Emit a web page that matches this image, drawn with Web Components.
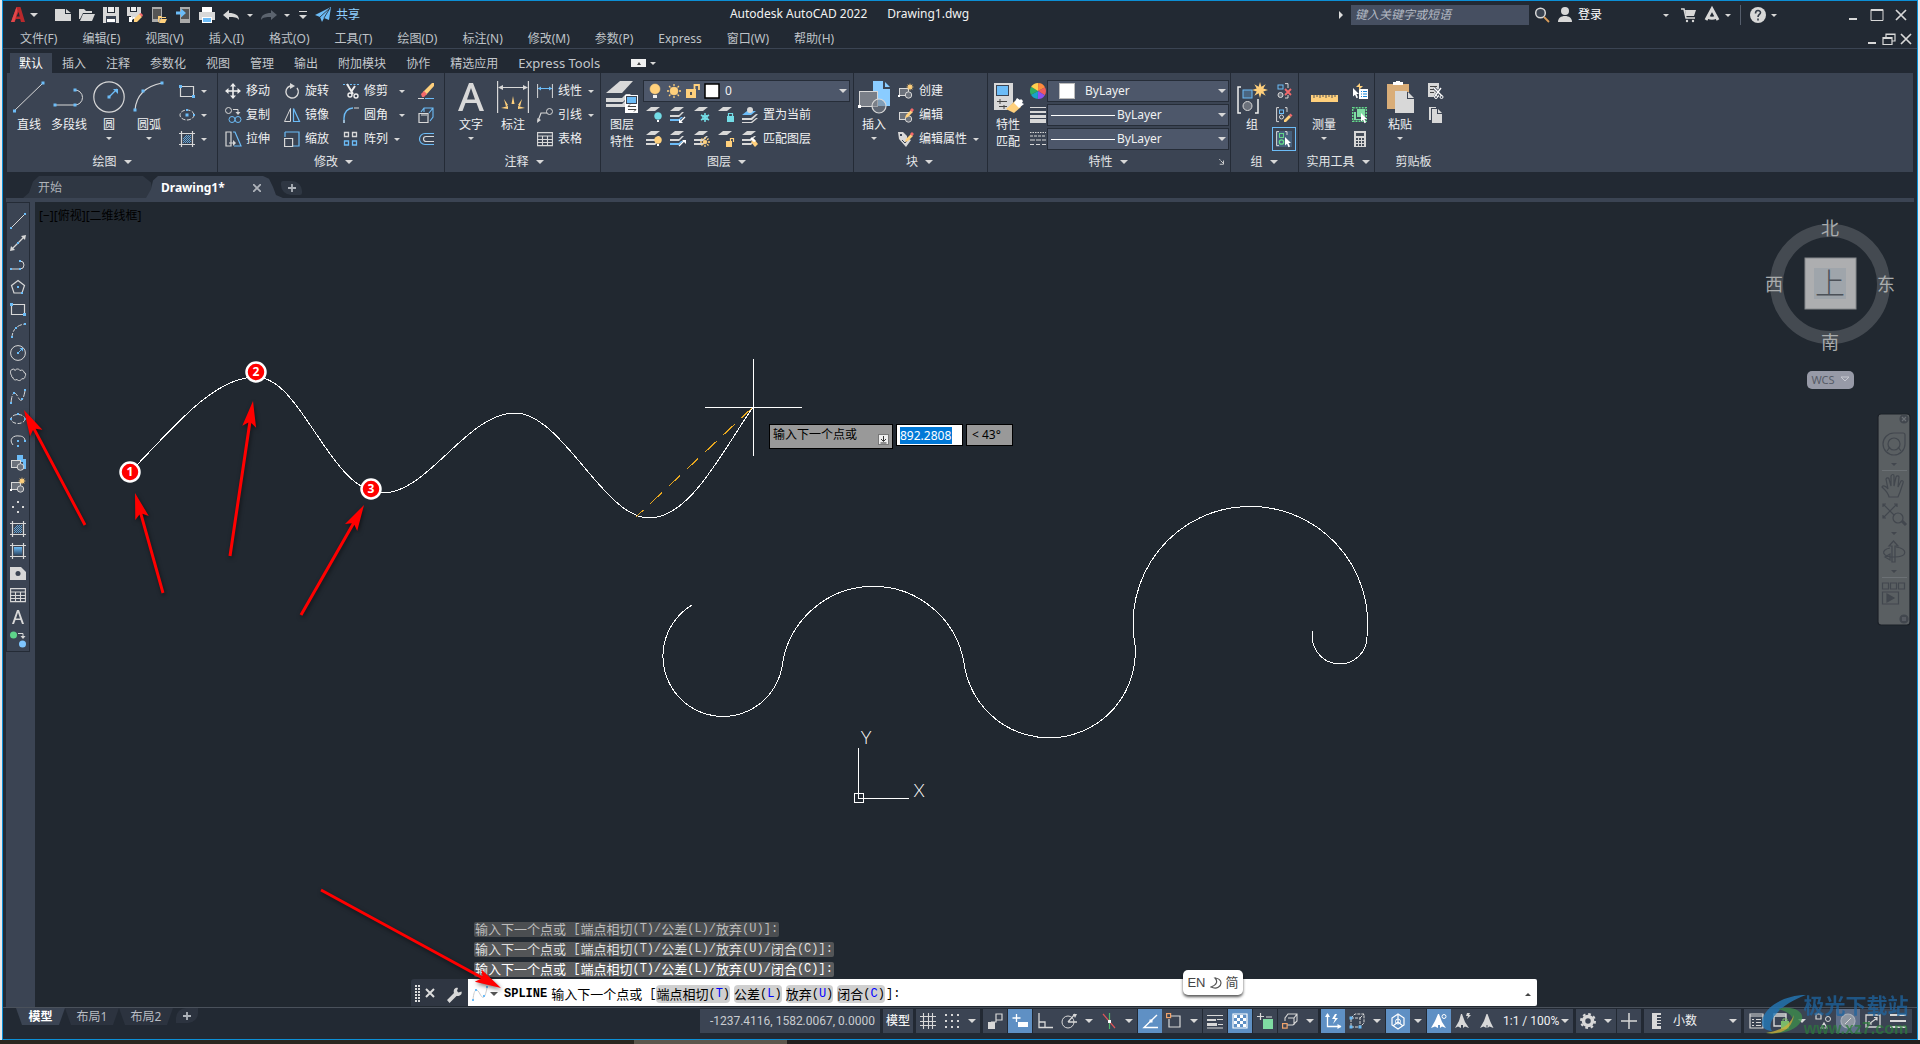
<!DOCTYPE html>
<html lang="zh-CN">
<head>
<meta charset="utf-8">
<title>Autodesk AutoCAD 2022</title>
<style>
html,body{height:100%;margin:0}
body{font:12px/16px "Noto Sans","Noto Sans CJK SC",sans-serif;color:#e4e6e8;background:#e9eaec;overflow:hidden}
</style>
</head>
<body>
<cad-window></cad-window>
<script>
const G = '#d8d8d8', B = '#6cbcf7', Y = '#ffd07c', D = '#3b4453';
const BASE = `
*{box-sizing:border-box}
button,input,select{font:inherit;color:inherit;background:none;border:0;margin:0;padding:0;outline:0;border-radius:0}
select{appearance:none}
a{color:inherit;text-decoration:none}
.tri{flex:none;width:0;height:0;border:3px solid transparent;border-top:3px solid #d8d8d8;border-bottom:0}
.tri.big{border-width:4px 4px 0 4px}
`;
const define = (name, markup, css, after) => customElements.define(name, class extends HTMLElement {
  constructor() { super(); this.attachShadow({ mode: 'open' }); }
  connectedCallback() {
    const m = typeof markup === 'function' ? markup(this) : markup;
    this.shadowRoot.innerHTML = `<style>${BASE}${css}</style>${m}`;
    if (after) after(this.shadowRoot, this);
  }
});

/* ---------- icons ---------- */
const sq = (x, y, c = B, s = 3) => `<rect x="${x - s / 2}" y="${y - s / 2}" width="${s}" height="${s}" fill="${c}"/>`;
const ln = (d, c = G, w = 1) => `<path d="${d}" fill="none" stroke="${c}" stroke-width="${w}"/>`;
const fl = (d, c = G) => `<path d="${d}" fill="${c}"/>`;
const ci = (x, y, r, c = G, f = 'none', w = 1) => `<circle cx="${x}" cy="${y}" r="${r}" fill="${f}" stroke="${c}" stroke-width="${w}"/>`;
const pencil = fl('M8 8L13 3l2 2-5 5-3 1z', Y) + fl('M12 3l2-2 2 2-2 2z', '#f4696b');
const star = (x, y, r) => { let p = ''; for (let i = 0; i < 16; i++) { const a = i * Math.PI / 8, q = i % 2 ? r * .45 : r; p += (i ? 'L' : 'M') + (x + q * Math.sin(a)).toFixed(1) + ' ' + (y - q * Math.cos(a)).toFixed(1); } return fl(p + 'z', Y); };
const layer = (y, c = G) => fl(`M0 ${y + 4}L5 ${y}H14L9 ${y + 4}z`, c);
const stack = c => layer(0, G) + fl('M0 8h9l3-3h2l-5 5H0z', G) + fl('M0 12h9l2-2h2l-4 4H0z', c || G);
const bulb = (x, y, c) => ci(x, y, 3.5, c, c, .5) + `<rect x="${x - 1}" y="${y + 4}" width="2" height="2" fill="#fff"/>`;
const sun = (x, y, r) => { let p = ''; for (let i = 0; i < 8; i++) { const a = i * Math.PI / 4; p += `M${x + Math.cos(a) * (r + 1)} ${y + Math.sin(a) * (r + 1)}L${x + Math.cos(a) * (r + 3)} ${y + Math.sin(a) * (r + 3)}`; } return ci(x, y, r, Y, Y, .5) + ln(p, Y, 1.3); };
const person = ci(8, 4, 4, G, G, 0) + fl('M1 15c0-4 3-6 7-6s7 2 7 6z');
const cursor = (x, y) => `<path transform="translate(${x} ${y})" d="M0 0l6 6H3.500l1.500 3.500-1.500.7L2 6.700 0 8.500z" fill="#fff"/>`;
const I = {
  logo: [16, `<path d="M6.500 0h4L15 15h-4l-.8-3H6l-1.500 3H1z" fill="#b9292c"/><path d="M8.600 5L6.500 9.500h3.300z" fill="#222933"/><path d="M1 15l5.500-15L7.500 4 4.500 15z" fill="#e2484b"/>`],
  new: [16, fl('M0 2h10v5h6v7H0z') + fl('M11 2l5 4h-5z')],
  open: [16, fl('M0 2h5l2 2h6v2H4L1 12l-1 0z') + fl('M4 7h12l-3 7H1z')],
  save: [16, fl('M0 0h4v6h8V0h4v16H0z') + fl('M5 0h6v5H5z', '#eee') + fl('M3 9h10v7H3z', D) + fl('M4 12h8v3H4z', '#fff')],
  saveas: [16, fl('M0 0h3v5h7V0h4v9l-3 3H4V9H0z') + fl('M4 0h5v4H4z', '#eee') + fl('M2 10h3v5H2z', '#fff') + ln('M4 14l3-4 1 4', '#fff', 1) + fl('M7 12l5-5 3 3-5 5-3 0z', Y) + fl('M12 7l2-1 2 2-1 2z', '#f4696b')],
  openweb: [16, fl('M1 0h10v15H1z', '#aaa') + fl('M2 2h8v10H2z', '#555') + fl('M7 9h3l1 1h4v1H9l-2 5z', Y) + fl('M10 12h6l-2 4H8z', Y)],
  saveweb: [16, fl('M5 0h10v16H5z', '#aaa') + fl('M6 2h8v10H6z', '#555') + fl('M1 4.500h5V1.500L11 6 6 10.500v-3H1z', B)],
  print: [16, fl('M3 0h10v5H3z', '#fff') + fl('M0 5h16v8h-3v-3H3v3H0z') + fl('M3 10h10v6H3z', '#fff') + fl('M4 11h8v4H4z', B)],
  undo: [16, fl('M0 8l6-5v3c6 0 10 2 10 7-2-3-5-3-10-3v3z')],
  redo: [16, fl('M16 8l-6-5v3C4 6 0 8 0 13c2-3 5-3 10-3v3z', '#5b636e')],
  share: [16, fl('M0 8L16 0 14 13 9 11 7 15 5 10z', B) + ln('M5 10L15 1M9 11l6-10', '#2c3440', .9)],
  search: [16, ci(6.500, 6, 4.800, G, '#3a4350', 1.500) + ln('M10 10l5 5', '#d99d5b', 1.800)],
  person: [16, person],
  cart: [16, ln('M0 2h3l2 9h9', G, 1.500) + fl('M4 3h11l-2 6H5z') + ci(6, 14, 1.200, G, G, 0) + ci(12, 14, 1.200, G, G, 0)],
  alogo: [16, ln('M2 13L8 2l6 11M4 10c3 2 5 2 8 0', G, 3)],
  help: [16, ci(8, 8, 8, G, G, 0) + ln('M5.500 6.500c0-4 5-3.500 5-1 0 2-2.500 2-2.500 4.500M8 11.500v2', '#333b47', 1.600)],
  min: [16, fl('M4 11h8v2H4z')], max: [16, ln('M2 2.500h12v11H2zM2 3.500h12', G, 1)], restore: [16, ln('M5 6V3h9v7h-3M2 6.500h9v7H2zM2 7.500h9M5 3.500h9', G, 1.200)], close: [16, ln('M3 3l10 10M13 3L3 13', G, 1.700)],
  line: [32, ln('M1 30L30 2') + sq(1.500, 30) + sq(30, 2)],
  pline: [32, ln('M2 24h20M22 24a7 7 0 0 0 0-15') + sq(2, 24) + sq(22, 24) + sq(22, 9)],
  circle: [32, ci(16, 16, 15.200, G, 'none', 1.200) + ln('M16 16l8-8', B, 1.200) + fl('M20 8h5v5z', B) + sq(16, 16)],
  arc: [32, ln('M2 29C3 18 8 6 29 2', G, 1.200) + sq(2, 29) + sq(10, 10) + sq(29, 2)],
  rect: [16, ln('M1.500 3.500h13v10h-13z', G, 1.200) + sq(1.500, 3.500) + sq(14.500, 13.500)],
  ellipse: [16, `<ellipse cx="8" cy="8" rx="7" ry="5" fill="none" stroke="${G}" stroke-dasharray="4 1.500"/>` + sq(8, 8) + sq(8, 3, B, 2) + sq(15, 8, B, 2)],
  hatch: [16, ln('M0 2.500h16M0 13.500h16M2.500 0v16M13.500 0v16', G, 1.200) + ln('M4 8l4-4M4 12l8-8M8 12l4-4M4 10l6-6M6 12l6-6M10 12l2-2', B, .8)],
  move: [16, ln('M8 1v14M1 8h14', '#eee', 1.600) + fl('M8 0l3 3.500H5zM8 16l3-3.500H5zM0 8l3.500-3v6zM16 8l-3.500-3v6z', '#eee')],
  rotate: [16, ln('M6 3a6.200 6.200 0 1 0 7 2', G, 1.400) + fl('M6 0l5 3-5 3z')],
  trim: [16, ln('M0 1.500h16', B, 1) .replace('stroke-width', 'stroke-dasharray="2 1.500" stroke-width') + ln('M4 1l6 10M12 3l-4 6', '#eee', 2) + ci(7, 12, 2, '#eee', 'none', 1.400) + ci(13, 13, 2, '#eee', 'none', 1.400)],
  erase: [16, fl('M5 9L14 0h2v3l-8 9z', Y) + fl('M3 11l3-3 3 3-3 3H4z', '#f4696b') + ln('M0 15.500h6', G) + ln('M7 15.500h9', B)],
  copy: [16, ci(3.500, 3.500, 3) + ci(7, 12.500, 3, B) + ci(13, 12.500, 3, B) + ln('M8 2.500h5v3', G) + fl('M10.500 5h5L13 8z')],
  mirror: [16, ln('M6.500 1.500v13h-6z', G) + ln('M9.500 1.500v13h6z', B, 1.200)],
  fillet: [16, ln('M1 16V11C1 5 5 1 10 1', B, 1.400) + ln('M11 1h5M1 16v-3')],
  explode: [16, ln('M1 6.500h9v9H1zM3 8h6', G, 1.200) + ln('M3 5l3-4h9v9l-3 4M6 5V1M11 6l4-5', B, 1.100)],
  stretch: [16, ln('M1 1h5v14H1zM4 12h5', G, 1.200) + fl('M8 9l3 3-3 3z') + ln('M8 1h2l6 14H9', B, 1.200)],
  scale: [16, ln('M1 1h14v14H8M1 1v5', B, 1.200) + ln('M.600 7.500h8v8h-8z', G, 1.200)],
  array: [16, ln('M1.500 1.500h4v4h-4zM9.500 1.500h4v4h-4z', G, 1.300) + ln('M1.500 10h4v4h-4zM9.500 10h4v4h-4z', B, 1.300)],
  offset: [16, ln('M16 2.500H7a5.500 5.500 0 0 0 0 11h9', B, 1.200) + ln('M16 5.500H8a2.500 2.500 0 0 0 0 5h8', G, 1.200)],
  text: [32, fl('M3 30L14 2h4l11 28h-4.500l-3-8h-11l-3 8zM12 18.500h8L16 7z')],
  dim: [32, ln('M.600 0v32M31.400 0v32M2 6.500h28', G, 1.200) + fl('M1 6.500l5-2.500v5zM31 6.500l-5-2.500v5z') + fl('M16 15l1.500 8h-3zM7 18l4 6-2 1.500zM25 18l-4 6 2 1.500zM4 27l7-2v3zM28 27l-7-2v3z', Y)],
  lindim: [16, ln('M.600 1v14M15.400 1v14') + ln('M1 5.500h14', B) + fl('M1 5.500l3-2v4zM15 5.500l-3-2v4z', B)],
  leader: [16, ln('M1 14L4 6h6', G, 1.200) + ci(12.500, 4.500, 3) + fl('M0 16l.5-5 3.500 2z')],
  table: [16, ln('M.600 1.600h14.800v13H.600zM0 5h16M0 8.500h16M0 11.500h16M5.500 5v10M10.500 5v10', G, 1.100)],
  layerprop: [32, fl('M0 12L14 0h13L16 12z') + fl('M0 17h16l4-4h5l-8 8H0z') + fl('M0 23h16l3-3v6H0z') + fl('M19 14h13v18H19z', '#fff') + fl('M20 15h11v8H20z', D) + fl('M21 16h9v6h-9z', B) + ln('M22 25.500h8M22 28.500h8M24 23.500l-2 2M28 30.500l2-2', '#444', 1)],
  bulb: [16, ci(8, 6, 5, Y, Y, .5) + fl('M6 12h4v3H6z', '#eee')],
  sun: [16, sun(8, 8, 4)],
  unlock: [16, fl('M1 6h10v9H1z', Y) + ln('M9.500 6V2h4.500v5', Y, 1.800) + fl('M5 9h2v3H5z', '#555')],
  white: [16, `<rect x="1" y="1" width="14" height="14" fill="#fff" stroke="#000" stroke-width="1.500"/>`],
  l1: [16, layer(0) + bulb(12, 9, '#73dce6')], l2: [16, stack(B) + ln('M10 15l5-5', '#fff', 1.200) + fl('M9 12l4 4H9z', '#fff')],
  l3: [16, layer(0) + ln('M11 6v9M7 8l8 5M7 13l8-5', '#73dce6', 1.500) + ci(11, 10.500, 2.500, '#73dce6')], l4: [16, layer(0) + fl('M9 9h7v6H9z', '#73dce6') + ln('M10.500 9V6.500h4V9', '#73dce6', 1.200)],
  l5: [16, layer(4, B) + fl('M0 11h9l5-4h2l-6 6H0z') + fl('M0 15h9l5-4h2l-6 5H0z') + ci(8, 3, 3, G, G, 0)],
  l6: [16, stack() + bulb(12, 9, Y)], l7: [16, stack(B) + ln('M9 15l5-5', '#fff', 1.200) + fl('M12 9h4v4z', '#fff')],
  l8: [16, stack() + sun(11, 11, 2)], l9: [16, layer(0) + fl('M8 10h6v6H8z', Y) + ln('M12.500 10V7.500h3V11', Y, 1.200)],
  l10: [16, stack() + fl('M9 11l3-3 4 5-3 3z', Y) + fl('M8 8l2-2 4 4-2 1z', '#fff')],
  insert: [32, fl('M15 0h10v8h7v17H20V12h-5z', '#8accff') + fl('M27 1l5 5h-5z', '#8accff') + `<rect x="1.500" y="10.500" width="18" height="15" fill="#7a7f88" stroke="${G}"/>` + ci(21, 25, 7, G, '#7a7f8899', 1.200) + sq(1.500, 25.500, '#fff')],
  bcreate: [16, `<rect x="1.500" y="5.500" width="9" height="7" fill="#6b717b" stroke="${G}"/>` + ci(10.500, 12, 3.200, G, '#6b717b') + star(12, 4, 4) + sq(1, 13, '#fff', 2)],
  bedit: [16, `<rect x="1.500" y="5.500" width="9" height="7" fill="#6b717b" stroke="${G}"/>` + ci(10.500, 12, 3.200, G, '#6b717b') + pencil],
  battr: [16, fl('M0 1h5l4 4v2l4 2-5 7-7-8z') + fl('M2 3h2v2H2z', D) + ln('M4 9l3 3 4-5', D) + pencil],
  match: [32, fl('M2 2h19v20l-6 7H2z') + fl('M4 4h13v11H4z', D) + fl('M5 5h11v9H5z', B) + ln('M5 20.500h10M8 18v5M7 25.500h8M12 24v4', '#444') + fl('M14 28l9-8 6 6-7 6z', Y) + fl('M22 22l3-5 3 2 1-1 2 2-1 2 2 1-5 4z', '#fff')],
  wheel: [16, [0, 1, 2, 3, 4, 5].map(i => { const a = i * Math.PI / 3 - .5, b = a + Math.PI / 3; return fl(`M8 8L${8 + 8 * Math.cos(a)} ${8 + 8 * Math.sin(a)}A8 8 0 0 1 ${8 + 8 * Math.cos(b)} ${8 + 8 * Math.sin(b)}z`, ['#ef5b5b', '#8b51f0', '#19a3c6', '#2fae62', '#ffcf4d', '#ff8a3c'][i]); }).join('')],
  lwt: [16, fl('M0 0h16v1H0zM0 4h16v2H0zM0 8h16v3H0zM0 12h16v4H0z')],
  ltype: [16, `<g stroke="${G}" stroke-width="1.200"><path d="M0 1.500h16" stroke-dasharray="1.500 1"/><path d="M0 5h16" stroke-dasharray="3 1"/><path d="M0 9h16" stroke-dasharray="5 1"/><path d="M0 13.500h16" stroke-dasharray="4 2"/></g>`],
  group: [32, ln('M5 6H2v26h3M19 32h3V18', '#eee', 1.500) + `<rect x="7" y="9" width="9" height="8" fill="#4a6580" stroke="${B}"/>` + ci(11.500, 25, 4.500, G, '#6b717b') + star(24, 9, 8)],
  ungroup: [16, `<rect x="2" y="2" width="5" height="4" fill="none" stroke="${B}"/>` + ci(4.500, 12, 2.500, G, '#6b717b') + ln('M9 .600h3V5M12 12v3H9') + ln('M9 6l6 6M15 6l-6 6', '#f4696b', 1.800)],
  gedit: [16, ln('M3 .600H.600v14H3M9 .600h2V5') + `<rect x="3.500" y="3" width="4" height="3.500" fill="none" stroke="${B}"/>` + ci(5.500, 10, 2, G) + fl('M8 13l5-5 2 2-5 5H8z', Y) + fl('M13 8l1.500-1.500 2 2L15 10z', '#f4696b')],
  gsel: [16, ln('M3 .600H.600v14H3M9 .600h2V4') + `<rect x="3.500" y="2.500" width="4" height="4" fill="none" stroke="#63d98a"/>` + ci(5.500, 11, 2.200, '#63d98a', 'none', 1.300) + cursor(9, 6)],
  measure: [32, fl('M3 14h27v7H3z', Y) + ln('M6 14v3M9 14v2M12 14v3M15 14v2M18 14v3M21 14v2M24 14v3M27 14v2', '#555')],
  qsel: [16, cursor(1, 5) + fl('M7 6h9v10H7z', '#fff') + ln('M9 8.500h1M11 8.500h4M9 11h1M11 11h4M9 13.500h1M11 13.500h4', '#1b87d8', 1.200) + fl('M8 0l0 3h3l-4 4 0-3H4z', Y)],
  selall: [16, `<rect x=".7" y=".7" width="13.600" height="13.600" fill="none" stroke="#63d98a" stroke-width="1.400" stroke-dasharray="2 1"/>` + fl('M2 5h2v7h6v1H2z', '#7fdba2') + fl('M5 2h8v8H5z', '#7fdba2') + cursor(9, 6)],
  calc: [16, fl('M2 0h12v16H2z') + fl('M4 2h8v3H4zM4 7h2v2H4zM7 7h2v2H7zM10 7h2v2h-2zM4 10h2v2H4zM7 10h2v2H7zM10 10h2v2h-2zM4 13h2v2H4zM7 13h2v2H7zM10 13h2v2h-2z', '#444c58')],
  paste: [32, fl('M3 3h22v8h-9v17H3z', '#d9ad78') + fl('M9 4V1h3V0h4v1h3v3z', '#fff') + fl('M11 10h12v8h7v14H11z') + fl('M24 11l6 6h-6z')],
  cut: [16, fl('M0 0h11v14H0z') + ln('M2 3.500h7M2 6.500h4M2 9.500h4', '#444') + ln('M6 5l8 8M13 5l-6 9', D, 3) + ln('M6 5l8 8M13 5l-6 8', '#fff', 1.400) + ci(8, 14, 1.500, '#fff') + ci(13.500, 14, 1.500, '#fff')],
  copyclip: [16, fl('M1 0h6v1H3v12H1z') + fl('M4 2h5v5h5v9H4z') + fl('M10 2l4 4h-4z') + fl('M7 0h1v1H7z')],
  sline: [16, ln('M1 15L15 1') + sq(1, 15, B, 2) + sq(15, 1, B, 2)],
  xline: [16, ln('M2 14L14 2', G, 1.200) + fl('M0 16l1-5 4 4zM16 0l-1 5-4-4z') + sq(8, 8, B, 2)],
  spline2: [16, ln('M1 12h9M10 12a4 4 0 0 0 0-8', G) + sq(1, 12, B, 2) + sq(10, 12, B, 2) + sq(10, 4, B, 2)],
  polygon: [16, ln('M8 1.500l6.500 5-2.500 7.500H4L1.500 6.500z', G, 1.200) + sq(8, 8, B, 2) + sq(12, 14, B, 2)],
  sarc: [16, ln('M2 15C2 8 6 2 15 1').replace('stroke-width', 'stroke-dasharray="5 1.500" stroke-width') + sq(2, 14, B, 2) + sq(6, 5, B, 2) + sq(15, 1, B, 2)],
  scircle: [16, ci(8, 8, 7.400) + ln('M8 8l4-4', B) + fl('M9.500 3H13v3.500z', B) + sq(8, 8, B, 2)],
  cloud: [16, ln('M2 9C0 7 0 3 2 2.500c2-1 3 0 3 1 1-2 4-2 5 0 2-1 4 0 4 2 2 0 2 3 1 4 0 2-2 3-3 2-1 2-3 3-5 1-2 1-4 0-4-2-1 0-2-1-1-1.500z', G)],
  spl: [16, ln('M1 14C2 2 5 2 8 8s5 4 7-6').replace('stroke-width', 'stroke-dasharray="7 1.500" stroke-width') + sq(1, 14, B, 2) + sq(4, 4, B, 2) + sq(12, 10, B, 2) + sq(15, 1, B, 2)],
  sell: [16, `<ellipse cx="8" cy="8" rx="7" ry="4.500" fill="none" stroke="${G}" stroke-dasharray="4 1.500"/>` + sq(8, 3, B, 2) + sq(1, 8, B, 2) + sq(15, 8, B, 2)],
  sella: [16, ln('M3 12C-2 6 4 2 9 3c4 0 6 2 6 5') + sq(8, 8, B, 2) + sq(8, 13, B, 2) + sq(15, 8, B, 2)],
  sins: [16, fl('M7 0h6v4h3v10h-3V7H7z', B) + `<rect x="1.500" y="5.500" width="9" height="7" fill="#6b717b" stroke="${G}"/>` + ci(10.500, 12, 3.300, G, '#6b717b')],
  points: [16, sq(8, 3, G, 2) + sq(3, 8, G, 2) + sq(13, 8, G, 2) + sq(8, 13, G, 2)],
  gradient: [16, `<defs><linearGradient id="gr" x2="0" y2="1"><stop stop-color="#6cbcf7"/><stop offset="1" stop-color="#2d4763"/></linearGradient></defs>` + ln('M0 2.500h16M0 13.500h16M2.500 0v16M13.500 0v16', G, 1.200) + '<rect x="4" y="4" width="8" height="8" fill="url(#gr)"/>'],
  region: [16, fl('M0 2h11l5 5v8H0z') + ci(8, 8.500, 2.500, D, D, 0)],
  stext: [16, fl('M2 15L7 1h2l5 14h-2l-1.500-4h-5L4 15zM6 9.500h4L8 3.500z')],
  addsel: [16, ci(3.500, 4, 3.500, '#5ed48a', '#5ed48a', 0) + ci(12.500, 13, 3.500, '#7fc6ff', '#7fc6ff', 0) + ln('M8 2.500h5v3') + fl('M10.500 5h5L13 8z')],
  sgrid: [16, ln('M0 3.500h16M0 8.500h16M0 12.500h16M3.500 0v16M8.500 0v16M12.500 0v16', G, 1.100)],
  dots: [16, [2, 8, 14].map(y => [2, 8, 14].map(x => sq(x, y, G, 2)).join('')).join('')],
  infer: [16, fl('M1 9h7v7H1z') + ln('M9 1h6v6H9zM4 9h5V7', G, 1.200)],
  dyn: [16, ln('M4.500 1v8M.500 5h8', '#fff', 1.300) + fl('M6 9h10v5H6z', '#fff')],
  ortho: [16, ln('M2 0v14.500h14M2 9h6v5', G, 1.300)],
  polar: [16, ci(7, 9, 6, G) + ln('M7 9h9M7 9l7-8', G, 1.300) + fl('M12 1l4 0-2 4z')],
  iso: [16, ln('M2 1l12 14', '#e0555a', 1.200) + ln('M8.500 0v16', '#4fb56b', 1.200) + sq(8.500, 8.500, '#fff', 3)],
  otrack: [16, ln('M15 2L2 14.500h14', '#fff', 1.400) + sq(9, 8, '#fff', 3)],
  osnap: [16, ln('M5 3h9v11H3V6', G, 1.200) + `<rect x=".600" y=".600" width="4" height="4" fill="${D}" stroke="#f2a36b" stroke-width="1.200"/>`],
  slw: [16, ln('M0 2.500h16', G, 1) + fl('M0 6h9v2H0zM10 6h6v1h-6zM0 10h10v3H0z') + ln('M11 11.500h5M0 15h16', G)],
  transp: [16, ln('M1 1h14v14H1z', '#fff', 1.200) + [0, 1, 2, 3].map(r => [0, 1, 2, 3].map(c => (r + c) % 2 ? '' : `<rect x="${2 + c * 3}" y="${2 + r * 3}" width="3" height="3" fill="#fff"/>`).join('')).join('')],
  cycle: [16, ln('M3.500 0v7M0 3.500h7', G, 1.200) + ln('M9 4h6', G) + fl('M6 6h10v10H6z', '#7fdba2')],
  osnap3: [16, ln('M3 8V5l3-4h9v7l-4 4H5M6 5h6l3-4M12 5v7', G, 1.100) + `<rect x=".600" y="10.600" width="4.500" height="4.500" fill="none" stroke="#f2a36b" stroke-width="1.200"/>`],
  ducs: [16, ln('M2.500 1v12.500H16', '#fff', 1.300) + fl('M0 4l2.500-4L5 4zM12.500 11l4 2.500-4 2.500zM10 1L7 6h3l-2 5 5-6h-3l2-4z', '#fff')],
  filter: [16, ln('M2 5h9v9H2zM2 5l4-4h9v9l-4 4M11 5l4-4', G).replace('stroke-width', 'stroke-dasharray="3 1" stroke-width') + sq(2, 5, B) + sq(2, 14, B) + sq(11, 14, B)],
  gizmo: [16, ln('M8 2v7M8 9l-5 4M8 9l5 4M8 1l6 4v7l-6 4-6-4V5z', '#fff', 1.200) + ci(8, 8.500, 2.500, '#fff')],
  ann1: [16, fl('M7 1h1l3 8 4 6-4-1.500-2 1.500V12H7v3l-3-1.500L0 15l4-7z', '#fff') + ci(13, 3.500, 2, '#fff')],
  ann2: [16, fl('M6 1h1l3 8 4 6-4-1.500-2 1.500V12H6v3l-3-1.500L0 15l4-7z') + fl('M12 0l-1 3h2l-1 3 4-4h-2l1-2z')],
  ann3: [16, fl('M7.500 1h1l3 8 3 6-4-1.500-2 1.500V12h-1v3l-3-1.500L1 15l4-7z')],
  gear: [16, `<circle cx="8" cy="8" r="4.500" fill="none" stroke="${G}" stroke-width="3.500"/><circle cx="8" cy="8" r="7" fill="none" stroke="${G}" stroke-width="2" stroke-dasharray="2.700 2.800"/>`],
  plus: [16, ln('M8 0v16M0 8h16', G, 1.500)],
  units: [16, fl('M4 0h9v2H9v2h4v1H9v2h4v1H9v2h4v1H9v2h4v3H4z')],
  qp: [16, ln('M2 1h13v14H2zM2 3h13', G, 1.200) + ln('M4 6.500h2M8 6.500h5M4 9.500h2M8 9.500h5M4 12.500h2M8 12.500h5', G, 1.200)],
  lockui: [16, ln('M1 1h12v12H1zM1 3h12', G, 1.400) + fl('M8 8h8v8H8z', '#7ab96a') + ln('M10 8V6h4v2', '#7ab96a')],
  isolate: [16, ln('M1 1h5v5H1zM6 15l3-5 3 5z', G, 1.200) + ci(13, 6, 2.500)],
  accel: [16, ci(8, 8, 7, '#aab1bb', '#8f97a2', 1.200) + ln('M5 11l6-6', G, 1)],
  clean: [16, ln('M1 2h14v12H1z', G, 1.300) + ln('M4 11l8-6M9 4.500h3v3M4 8v3h3', G, 1.200)],
  menu: [16, fl('M0 1h16v2H0zM0 7h16v2H0zM0 13h16v2H0z')],
  wrench: [16, fl('M1 13l7-7c-1-3 1-6 4-5l-1 3 1.500 1.500L15.500 4.500c1 3-2 5-5 4.500l-7 7z')]
};
customElements.define('cad-icon', class extends HTMLElement {
  connectedCallback() {
    const [vb, body] = I[this.getAttribute('name')], s = this.getAttribute('size') || vb;
    this.attachShadow({ mode: 'open' }).innerHTML = `<style>:host{display:block;flex:none;width:${s}px;height:${s}px}svg{display:block;width:100%;height:100%;overflow:visible}</style><svg viewBox="0 0 ${vb} ${vb}" aria-hidden="true">${body}</svg>`;
  }
});
const ic = (n, s) => `<cad-icon name="${n}"${s ? ` size="${s}"` : ''}></cad-icon>`;

/* ---------- top bars ---------- */
define('title-bar', `
<div class="l"><button aria-label="应用程序">${ic('logo')}</button><i class="tri big"></i>
<div class="q">${['new', 'open', 'save', 'saveas', 'openweb', 'saveweb', 'print', 'undo'].map(n => `<button aria-label="${n}">${ic(n)}</button>`).join('')}</div>
<i class="tri"></i><button class="r" aria-label="redo">${ic('redo')}</button><i class="tri"></i><span class="more"><i class="tri big"></i></span>
<button class="share">${ic('share')}共享</button></div>
<div class="t"><span>Autodesk AutoCAD 2022</span><span>Drawing1.dwg</span></div>
<div class="rr"><i class="rt"></i><input aria-label="搜索" placeholder="键入关键字或短语">${ic('search')}<button class="login">${ic('person')}登录</button><i class="tri"></i>${ic('cart')}<span class="p">${ic('alogo')}<i class="tri"></i></span><span class="p h">${ic('help')}<i class="tri"></i></span>
<span class="w"><button aria-label="最小化">${ic('min')}</button><button aria-label="最大化">${ic('max')}</button><button aria-label="关闭">${ic('close')}</button></span></div>`,
`:host{display:flex;justify-content:space-between;align-items:center;height:28px;padding:0 8px 0 7px}
.l,.q,.rr,.p,.w,.share,.login,.more{display:flex;align-items:center}
button{display:flex}
.l>.tri{margin-left:4px}.q{gap:8px;margin:0 8px 0 17px}.q+.tri,.q~.tri{margin-left:0}
.l .r{margin:0 7px 0 8px}.l .more{margin:0 8px 0 9px;border-top:1px solid #d8d8d8;padding-top:3px}
.share{gap:5px;color:#8fd0ff}
.t{display:flex;gap:20px;color:#f2f2f2;padding-bottom:2px}
.rt{border:4px solid transparent;border-left:4px solid #ddd;border-right:0;margin-right:8px}
input{width:178px;height:20px;background:#464f61;font-style:italic;padding:0 4px 1px;margin-right:5px}input::placeholder{color:#b4bac4;opacity:1}
.login{gap:5px;margin-left:7px;color:#fff}.login+.tri{margin:0 12px 0 61px}
.p{gap:5px;margin-left:7px}.h{border-left:1px solid #555e6c;padding:2px 0 2px 9px;margin-left:9px}
.w{gap:8px;margin-left:68px}`);

define('menu-bar', `<nav>${['文件(F)', '编辑(E)', '视图(V)', '插入(I)', '格式(O)', '工具(T)', '绘图(D)', '标注(N)', '修改(M)', '参数(P)', 'Express', '窗口(W)', '帮助(H)'].map(t => `<a href="#">${t}</a>`).join('')}</nav>
<span><button aria-label="最小化">${ic('min')}</button><button aria-label="还原">${ic('restore')}</button><button aria-label="关闭">${ic('close')}</button></span>`,
`:host{display:flex;justify-content:space-between;align-items:center;height:20px;padding:0 3px 0 17px;border-bottom:1px solid #3b4453;color:#bfc3c8}nav{display:flex;gap:25px}span{display:flex;gap:1px}button{display:flex;}`);

define('ribbon-tabs', `${['默认', '插入', '注释', '参数化', '视图', '管理', '输出', '附加模块', '协作', '精选应用', 'Express Tools'].map((t, i) => `<button class="${i ? (i == 10 ? 'en' : '') : 'on'}">${t}</button>`).join('')}<button class="c" aria-label="最小化功能区"><b></b></button><i class="tri"></i>`,
`:host{display:flex;align-items:center;height:24px;padding:4px 0 0 7px;color:#c3c7cc}button{padding:1px 10px 0;height:20px}.en{font-size:13px;padding:0 10px}.on{background:#3b4453;color:#fff;padding:1px 9px 0}.c{padding:0 4px 0 21px;display:flex;align-items:center}
b{width:15px;height:8px;background:#f0f0f0;display:flex;align-items:center;justify-content:center}b::after{content:"";border:2px solid transparent;border-bottom:3px solid #444;border-top:0}`);

/* ---------- ribbon ---------- */
define('tool-button', e => {
  const l = e.getAttribute('label') || '', on = e.hasAttribute('on');
  return `<button class="${on ? 'on' : ''}" aria-label="${l || e.getAttribute('icon')}">${ic(e.getAttribute('icon'))}${l ? `<span>${l}</span>` : ''}${e.hasAttribute('drop') ? '<i class="tri"></i>' : ''}</button>`;
}, `:host{display:flex;align-items:center;height:24px}button{display:flex;align-items:center;gap:5px;white-space:nowrap}.tri{margin-left:1px}:host([wide]) .tri{margin-left:6px}.on{outline:1px solid #6cbcf7;outline-offset:3px;background:#46607b}`);
define('big-button', e => `<button>${ic(e.getAttribute('icon'))}<span>${e.getAttribute('label').replace(' ', '<br>')}</span>${e.hasAttribute('drop') ? '<i class="tri"></i>' : ''}</button>`,
`:host{display:block;width:40px;flex:none;padding-top:2px}button{width:100%;display:flex;flex-direction:column;align-items:center;white-space:nowrap}span{margin-top:3px;line-height:17px;text-align:center}.tri{margin-top:4px}`);
define('combo-box', e => `<slot></slot><select aria-label="${e.getAttribute('name')}"><option>${e.getAttribute('value')}</option></select><i class="tri big"></i>`,
`:host{display:flex;align-items:center;height:22px;background:#4d576a;border:1px solid #262d38;padding:0 2px 0 4px}select{flex:1;min-width:0;width:0}`);
define('ribbon-panel', e => `<div><slot></slot></div><footer><button>${e.getAttribute('label')}${e.hasAttribute('plain') ? '' : '<i class="tri big"></i>'}</button>${e.hasAttribute('launch') ? '<svg viewBox="0 0 8 8"><path d="M0 0h1v1M2 2l4 4M6 2v5H1" fill="none" stroke="#d8d8d8" stroke-width="1.2"/></svg>' : ''}</footer>`,
`:host{display:flex;flex-direction:column;flex:none;height:99px;padding:6px 0 0 2px;border-right:1px solid #242b36;background:#3b4453}div{display:flex;height:72px}
footer{display:flex;justify-content:center;align-items:center;height:21px;position:relative;color:#e4e6e8;padding:1px 2px 0 0}button{display:flex;align-items:center;gap:7px}svg{width:6px;position:absolute;right:5px;top:8px}`);

const tb = (i, l = '', x = '') => `<tool-button icon="${i}" label="${l}" ${x}></tool-button>`;
const bb = (i, l, x = '') => `<big-button icon="${i}" label="${l}" ${x}></big-button>`;
define('ribbon-bar', `
<ribbon-panel class="p1" label="绘图">${bb('line', '直线')}${bb('pline', '多段线')}${bb('circle', '圆', 'drop')}${bb('arc', '圆弧', 'drop')}<div class="col sm">${tb('rect', '', 'drop')}${tb('ellipse', '', 'drop')}${tb('hatch', '', 'drop')}</div></ribbon-panel>
<ribbon-panel class="p2" label="修改"><div class="mod">${tb('move', '移动')}${tb('rotate', '旋转')}${tb('trim', '修剪', 'drop wide')}${tb('erase')}${tb('copy', '复制')}${tb('mirror', '镜像')}${tb('fillet', '圆角', 'drop wide')}${tb('explode')}${tb('stretch', '拉伸')}${tb('scale', '缩放')}${tb('array', '阵列', 'drop')}${tb('offset')}</div></ribbon-panel>
<ribbon-panel class="p3" label="注释">${bb('text', '文字', 'drop')}${bb('dim', '标注')}<div class="col">${tb('lindim', '线性', 'drop')}${tb('leader', '引线', 'drop')}${tb('table', '表格')}</div></ribbon-panel>
<ribbon-panel class="p4" label="图层">${bb('layerprop', '图层 特性')}<div class="col lay"><combo-box name="图层" value="0">${ic('bulb')}${ic('sun')}${ic('unlock')}${ic('white')}</combo-box><div class="r">${tb('l1')}${tb('l2')}${tb('l3')}${tb('l4')}${tb('l5', '置为当前')}</div><div class="r">${tb('l6')}${tb('l7')}${tb('l8')}${tb('l9')}${tb('l10', '匹配图层')}</div></div></ribbon-panel>
<ribbon-panel class="p5" label="块">${bb('insert', '插入', 'drop')}<div class="col">${tb('bcreate', '创建')}${tb('bedit', '编辑')}${tb('battr', '编辑属性', 'drop')}</div></ribbon-panel>
<ribbon-panel class="p6" label="特性" launch>${bb('match', '特性 匹配')}<div class="col">${tb('wheel')}${tb('lwt')}${tb('ltype')}</div><div class="col cb"><combo-box name="颜色" value="ByLayer"><i class="sw"></i></combo-box><combo-box name="线宽" value="ByLayer"><i class="ln"></i></combo-box><combo-box name="线型" value="ByLayer"><i class="ln"></i></combo-box></div></ribbon-panel>
<ribbon-panel class="p7" label="组">${bb('group', '组')}<div class="col">${tb('ungroup')}${tb('gedit')}${tb('gsel', '', 'on')}</div></ribbon-panel>
<ribbon-panel class="p8" label="实用工具">${bb('measure', '测量', 'drop')}<div class="col">${tb('qsel')}${tb('selall')}${tb('calc')}</div></ribbon-panel>
<ribbon-panel class="p9" label="剪贴板" plain>${bb('paste', '粘贴', 'drop')}<div class="col">${tb('cut')}${tb('copyclip')}</div></ribbon-panel>`,
`:host{display:flex;height:99px;margin:0 4px;background:#3b4453;color:#f0f1f2}
.col{display:flex;flex-direction:column}.r{display:flex;gap:8px}
.p1{width:211px}.p2{width:227px;padding-left:7px}.p3{width:156px;padding-left:5px}.p4{width:253px;padding-left:1px}.p5{width:134px;padding-left:0}.p6{width:243px;padding-left:0}.p7{width:68px;padding-left:1px}.p8{width:76px;padding-left:5px}.p9{width:74px;border:0;padding-left:5px}
.sm{margin-left:10px}.mod{display:grid;grid-template-columns:59px 59px 75px 16px;grid-auto-rows:24px}
.p3 .col{margin-left:3px}.p3 big-button{width:42px}
.lay{width:207px;margin-left:1px;}.lay .r{padding-left:3px}.lay combo-box{width:207px;margin:1px 0;gap:3px;padding-left:3px}
.lay combo-box cad-icon:nth-child(4){margin-right:2px}
.p5 .col{margin-left:4px}.p6 .col{margin-left:2px}.p6 .cb{flex:1;gap:2px;padding:1px 1px 0 0;margin-left:1px}.cb combo-box{margin:0;padding-left:3px}
.sw{width:16px;height:16px;background:#fff;border:1px solid #bbb;margin:0 10px 0 8px}.ln{width:64px;height:1px;background:#fff;margin-right:2px}
.p7 .col{margin-left:4px}.p8 .col{margin-left:8px}.p9 .col{margin-left:8px}`);

define('file-tabs', `<button class="a">开始</button><button class="b">Drawing1*<svg viewBox="0 0 8 8"><path d="M0 0l8 8M8 0L0 8" stroke="#aeb3ba" stroke-width="1.8"/></svg></button><button class="c" aria-label="新图形"><svg viewBox="0 0 8 8"><path d="M4 0v8M0 4h8" stroke="#aeb3ba" stroke-width="1.8"/></svg></button>`,
`:host{display:flex;align-items:flex-end;height:30px;padding-left:17px;border-bottom:4px solid #3b4453;margin:0 3px}
button{height:22px;display:flex;align-items:center;color:#aeb3ba;padding-top:2px}svg{width:8px;height:8px}
.a{width:130px;padding-left:15px;background:#2f3743;clip-path:polygon(0 100%,6px 76%,10px 25%,16px 0,120px 0,128px 30%,129px 60%,130px 100%)}
.b{width:137px;padding-right:22px;padding-left:15px;margin-left:-7px;justify-content:space-between;font-weight:700;color:#fff;background:#3b4453;clip-path:polygon(0 100%,5px 60%,7px 20%,12px 0,117px 0,123px 12%,127px 50%,130px 86%,137px 100%)}
.c{width:21px;height:14px;margin:0 0 3px -2px;padding:0;justify-content:center;background:#2f3743;border-radius:2px 10px 2px 10px}`);

/* ---------- drawing area ---------- */
define('draw-toolbar', `<div><i class="grip"></i>${['sline', 'xline', 'spline2', 'polygon', 'rect', 'sarc', 'scircle', 'cloud', 'spl', 'sell', 'sella', 'sins', 'bcreate', 'points', 'hatch', 'gradient', 'region', 'table', 'stext', 'addsel'].map(n => `<button aria-label="${n}">${ic(n)}</button>`).join('')}</div>`,
`:host{display:block;width:29px;flex:none;background:#3b4453}div{width:24px;border:1px solid #242b36;display:flex;flex-direction:column;align-items:center;padding-bottom:1px}
.grip{width:14px;height:4px;margin:3px 0 0;background:radial-gradient(circle,#c8c8c8 0 25%,transparent 30%) 0 0/2px 2px}button{height:22px;display:flex;align-items:center}`);

define('view-cube', `<svg width="140" height="180" viewBox="1760 215 140 180" font-size="18" fill="#a9acad" text-anchor="middle"><circle cx="1830" cy="284" r="53.500" fill="none" stroke="#444a51" stroke-width="13"/><rect x="1805" y="258" width="51" height="51" fill="#adaeb0" stroke="#85888b"/><rect x="1814" y="268" width="32" height="31" fill="#9fa5ab"/>
<text x="1830" y="235">北</text><text x="1830" y="349">南</text><text x="1774" y="291">西</text><text x="1886" y="291">东</text><text x="1830" y="294" font-size="30" font-weight="300" fill="#4c5158">上</text>
<rect x="1807" y="371" width="47" height="18" rx="5" fill="#979aa7"/><text x="1823" y="384" font-size="11" fill="#565a66">WCS</text><path d="M1841 377h8l-4 4z" fill="none" stroke="#c6c8d0"/></svg>`, `:host{display:block}svg{display:block}`);
define('nav-bar', `<svg width="34" height="213" viewBox="1877 413 34 213" fill="none" stroke="#42474e" stroke-width="1.200"><rect x="1878" y="414" width="32" height="211" rx="3" fill="#5a5f62" stroke="#1b2027"/><circle cx="1904" cy="419" r="4" fill="#42474e"/><path d="M1902 417l4 4m0-4l-4 4" stroke="#6a6f74"/>
<path d="M1883 444a11 11 0 1 0 22 0v-9a2 2 0 0 0-2-2h-9a11 11 0 0 0-11 11zM1887 451l3-4m11 4l-3-4"/><circle cx="1894" cy="444" r="6"/><path d="M1891 463h6l-3 3z" fill="#42474e" stroke="none"/><path d="M1882 470.500h25M1882 577.500h25" stroke="#6c7175"/>
<path d="M1889 497c-1-5-5-8-7-10 1-2 4-1 6 2l-2-10c1-2 3-1 3 0l2 7v-10c1-2 3-2 3 0v10l2-9c1-2 3-1 3 0l-1 10 3-6c1-1 3 0 2 2l-3 9-2 5z"/>
<path d="M1883 504l14 14M1897 504l-14 14M1883 507v-3h3M1894 504h3v3M1883 515v3h3"/><circle cx="1898" cy="518" r="5" fill="#5a5f62"/><path d="M1902 521l4 4" stroke-width="3"/><path d="M1891 532h6l-3 3zM1891 570h6l-3 3z" fill="#42474e" stroke="none"/>
<path d="M1892 562v-16h-3l4.500-5 4.500 5h-3v16z"/><path d="M1896 547c12 2 12 10-2 10-12 0-14-7-4-9M1890 554l-5 3 5 3z"/><path d="M1882.500 583h6v6h-6zM1890.500 583h6v6h-6zM1898.500 583h6v6h-6zM1882.500 592h16v12h-16z"/><path d="M1887 594v8l7-4z" fill="#42474e"/><circle cx="1904" cy="619" r="4" fill="#42474e"/><path d="M1902 618h4m-4 2h4" stroke="#6a6f74"/></svg>`, `:host{display:block}svg{display:block}`);
define('dynamic-input', `<label for="v">输入下一个点或<svg viewBox="0 0 11 11"><rect x=".500" y=".500" width="10" height="10" fill="#eee" stroke="#777"/><path d="M5.500 2v5M3 5l2.500 2.500L8 5M2.500 9h6" fill="none" stroke="#333"/></svg></label><span class="v"><input id="v" value="892.2808"></span><span class="a">&lt; 43°</span>`,
`:host{display:flex;align-items:flex-start;gap:3px;color:#000}label,.v,.a{border:1px solid #000;background:#999;height:22px;display:flex;align-items:center}label{width:124px;height:25px;padding:0 3px 3px 3px;justify-content:space-between;white-space:nowrap}svg{width:11px;height:11px;margin-top:9px}
.v{width:67px;background:#fff;padding:0 3px}input{width:52px;height:17px;background:#0078d7;color:#fff}.a{width:47px;padding-left:5px;white-space:pre}`);
define('drawing-view', `<svg class="d"><g transform="translate(-35 -202)" fill="none" stroke="#fff" stroke-width="1" shape-rendering="crispEdges">
<path d="M130 472C170 432 212 377 256 377C302 377 330 493 383 493C428 493 467 413 515 413C562 413 604 518 649 518C690 518 722 452 753 407"/>
<path d="M753 407L636 517" stroke="#e8a820" stroke-dasharray="16 9"/><path d="M705 407.500h97M753.500 359v97"/>
<path d="M692 605A60 60 0 1 0 782 667A92 92 0 0 1 964 663A86 86 0 0 0 1135 645A117.300 117.300 0 1 1 1367 636A27.300 27.300 0 1 1 1313 631"/>
<path d="M858.500 748v50.500H909M854.500 793.500h9v9h-9z"/></g>
<g transform="translate(-35 -202)" fill="#fff" font-family="Lato" font-weight="300" font-size="18" text-anchor="middle"><text x="866" y="744">Y</text><text x="919" y="797">X</text></g></svg>
<span class="vp">[−][俯视][二维线框]</span><view-cube></view-cube><nav-bar></nav-bar><dynamic-input></dynamic-input>`,
`:host{display:block;flex:1;position:relative;background:#212830;overflow:hidden}.d{position:absolute;inset:0;width:100%;height:100%}
.vp{position:absolute;left:4px;top:6px;color:#000}
view-cube{position:absolute;top:13px;right:17px}nav-bar{position:absolute;top:211px;right:6px}dynamic-input{position:absolute;left:734px;top:222px}`);

/* ---------- command window ---------- */
const mix = t => t.replace(/[\x20-\x7e]+/g, m => `<code>${m}</code>`);
define('command-line', `
<div class="h">${['输入下一个点或 [端点相切(T)/公差(L)/放弃(U)]:', '输入下一个点或 [端点相切(T)/公差(L)/放弃(U)/闭合(C)]:', '输入下一个点或 [端点相切(T)/公差(L)/放弃(U)/闭合(C)]:'].map((t, i) => `<p class="p${i}">${mix(t)}</p>`).join('')}</div>
<div class="c"><i class="grip"></i><button aria-label="关闭"><svg viewBox="0 0 10 10"><path d="M1 1l8 8M9 1L1 9" stroke="#ddd" stroke-width="2"/></svg></button><button aria-label="自定义">${ic('wrench')}</button>
<div class="in"><svg class="s" viewBox="0 0 16 16"><path d="M1 14C2 2 5 2 8 8s5 4 7-6" fill="none" stroke="#ccc"/><path d="M0 13h2v2H0zM3 3h2v2H3zM11 9h2v2h-2zM14 0h2v2h-2z" fill="#6cbcf7"/></svg><i class="tri big"></i><code class="cmd">SPLINE</code><span>${mix('输入下一个点或')}</span><code class="br">[</code>${[['端点相切', 'T'], ['公差', 'L'], ['放弃', 'U'], ['闭合', 'C']].map(a => `<button class="k">${a[0]}<code>(<u>${a[1]}</u>)</code></button>`).join('')}<code class="e">]:</code><i class="up"></i></div></div>`,
`:host{display:block;font-size:13px;line-height:15px}code{font:12px/15px "Liberation Mono",monospace}
p{margin:0 0 5px;width:max-content;height:15px;padding:0 1px;background:#5b5d5f;border-radius:2px;color:#fff;display:flex;align-items:center;white-space:pre}.p0{background:#4b4e51;color:#bbb}.p1{background:#535557;color:#ddd}
.h{padding-left:63px}.c{display:flex;height:27px;align-items:center;background:#2f3642;border-radius:3px 0 0 0;margin-top:-3px}
.grip{width:5px;height:18px;margin:0 5px 0 4px;background:linear-gradient(#2f3642 33%,transparent 33%) 0 0/3px 3px,linear-gradient(90deg,#ddd 66%,transparent 66%) 0 0/3px 3px}
.c>button{display:flex}.c>button>svg{width:10px}.c>button+button{margin:4px 0 0 11px}
.in{flex:1;display:flex;align-items:center;align-self:stretch;background:#fff;color:#000;margin-left:6px;padding:3px 6px 0 4px;border-radius:0 2px 2px 0;overflow:hidden}
.s{width:16px}.in .tri{border-top-color:#555;margin:0 6px 0 2px}.in .cmd{font-weight:700;margin-right:4px}.br{margin-left:7px}.k{display:flex;align-items:center;background:#d0d0d0;border-radius:4px;padding:0;height:18px;margin-right:4px}.e{margin-left:-3px}u{text-decoration:none;color:#00f}.up{margin-left:auto;border:3px solid transparent;border-bottom:3px solid #444;border-top:0}`);

/* ---------- bottom bar ---------- */
define('layout-tabs', `<button class="on">模型</button><button>布局1</button><button>布局2</button><button class="p" aria-label="新建布局"><svg viewBox="0 0 8 8"><path d="M4 0v8M0 4h8" stroke="#aeb3ba" stroke-width="1.800"/></svg></button>`,
`:host{display:flex;align-items:flex-start;padding-left:13px}button{height:17px;line-height:17px;width:54px;color:#b9bdc3;background:#2c333f;clip-path:polygon(0 0,100% 0,calc(100% - 6px) 100%,6px 100%)}.on{width:49px;background:#3b4453;color:#fff;font-weight:700}.p{width:22px;height:15px;margin-left:3px;display:flex;align-items:center;justify-content:center;clip-path:none;border-radius:10px 0 10px 0}svg{width:8px}`);
const si = (n, on) => `<button aria-label="${n}"${on ? ' class="on"' : ''}>${ic(n)}</button>`;
const sa = '<button class="ar" aria-label="展开"><i class="tri big"></i></button>';
define('status-bar', `<span class="s co">-1237.4116, 1582.0067, 0.0000</span><button class="s m">模型</button>
<div class="s">${si('sgrid')}${si('dots')}${sa}</div><div class="s n">${si('infer')}</div><div class="s n">${si('dyn', 1)}</div><div class="s n">${si('ortho')}${si('polar')}${sa}${si('iso')}${sa}</div><div class="s n">${si('otrack', 1)}${si('osnap')}${sa}</div><div class="s n">${si('slw')}</div><div class="s n">${si('transp', 1)}</div><div class="s n">${si('cycle')}</div><div class="s">${si('osnap3')}${sa}</div>
<div class="s n">${si('ducs', 1)}${si('filter')}${sa}</div><div class="s n">${si('gizmo', 1)}${sa}</div><div class="s">${si('ann1', 1)}${si('ann2')}${si('ann3')}<span class="sc">1:1 / 100%</span>${sa}</div><div class="s n">${si('gear')}${sa}</div><div class="s">${si('plus')}</div><div class="s">${si('units')}<select aria-label="单位"><option>小数</option></select>${sa}</div><div class="s last">${si('qp')}${si('lockui')}${sa}${si('isolate')}${si('accel', 1)}${si('clean')}${si('menu')}</div>`,
`:host{display:flex;height:24px;color:#f0f1f2}.s{display:flex;align-items:center;background:#3b4453;margin-right:3px;height:24px}.n{margin-right:1px}
.s button{width:24px;height:24px;display:flex;align-items:center;justify-content:center}.s .ar{width:16px}.s .on{background:#5f90c4}.last .on{background:#60708a}
.co{width:180px;justify-content:flex-end;padding-right:5px;font-family:Roboto,sans-serif;color:#c9ccd1}.m{width:30px;justify-content:center;font-weight:500}.sc{font-family:Roboto,sans-serif;width:58px;padding-left:4px;white-space:nowrap}select{width:57px;padding-left:5px}.last{gap:1px;padding-right:2px}.s.last{margin:0}`);

/* ---------- marks over the drawing ---------- */
const arrow = (x1, y1, x2, y2) => {
  const L = Math.hypot(x2 - x1, y2 - y1), ux = (x2 - x1) / L, uy = (y2 - y1) / L;
  const p = (a, b) => `${(x2 - ux * a - uy * b).toFixed(1)} ${(y2 - uy * a + ux * b).toFixed(1)}`;
  return `<path d="M${p(0, 0)}L${p(26, 7)}L${p(22, 1.500)}L${p(L, 1.500)}L${p(L, -1.500)}L${p(22, -1.500)}L${p(26, -7)}z"/>`;
};
define('mark-layer', `<svg><g fill="#f00">${[[85, 525, 24, 410], [163, 593, 135, 493], [230, 556, 253, 401], [301, 615, 364, 505], [321, 890, 501, 988]].map(a => arrow(...a)).join('')}</g>
${[[130, 472, 1], [256, 372, 2], [371, 489, 3]].map(m => `<circle cx="${m[0]}" cy="${m[1]}" r="9.500" fill="#f00" stroke="#fff" stroke-width="2.500"/><text x="${m[0]}" y="${m[1] + 4}">${m[2]}</text>`).join('')}
<g opacity=".8"><path d="M1806 995c-24 0-44 14-44 28 0 6 6 8 10 8-6-8 6-26 34-36z" fill="#2479b8"/><path d="M1778 1009c14-4 26 2 24 10-3 10-18 16-36 14 14-2 24-6 26-12 2-6-6-10-14-12z" fill="#3d8a4c"/><path d="M1766 1033c14-2 24-8 28-18-2 14-12 20-28 18z" fill="#c9b13a"/></g>
<text class="w1" x="1856" y="1013">极光下载站</text><text class="w2" x="1856" y="1034">www.xz7.com</text></svg>`,
`:host{position:absolute;inset:0;pointer-events:none}svg{width:100%;height:100%;display:block}text{font:700 12px "Noto Sans",sans-serif;fill:#fff;text-anchor:middle}g[fill]{filter:drop-shadow(1px 2px 2px #0008)}
.w1{font:700 21px "Noto Sans CJK SC",sans-serif;fill:#1e64a0;opacity:.75}.w2{font:700 16px "Liberation Sans",sans-serif;fill:#2c7a3c;opacity:.75}`);
define('ime-bar', `<span>EN</span><svg viewBox="0 0 12 12"><path d="M5 1c3 3 2 7-4 9 6 3 10-1 10-4S8 1 5 1z" fill="none" stroke="#555" stroke-width="1.200"/></svg><span>简</span>`,
`:host{display:flex;align-items:center;justify-content:center;gap:4px;width:60px;height:25px;background:#fff;border-radius:5px;color:#444;font:13px/16px "Liberation Sans","Noto Sans CJK SC",sans-serif;box-shadow:0 2px 3px #000a}svg{width:12px}`);

define('cad-window', `<main><title-bar></title-bar><menu-bar></menu-bar><ribbon-tabs></ribbon-tabs><ribbon-bar></ribbon-bar><file-tabs></file-tabs>
<section><draw-toolbar></draw-toolbar><drawing-view></drawing-view></section><footer><layout-tabs></layout-tabs><status-bar></status-bar></footer></main><div class="task"></div>
<command-line></command-line><ime-bar></ime-bar><mark-layer></mark-layer>`,
`:host{display:flex;flex-direction:column;height:100vh;position:relative;overflow:hidden}
main{flex:1;min-height:0;display:flex;flex-direction:column;margin:0 2px;border:1px solid #0c8fd6;background:#222933}
section{flex:1;display:flex;min-height:0;padding-left:3px}footer{display:flex;justify-content:space-between;height:32px;border-top:1px solid #4a515b;padding-right:5px}status-bar{margin-top:1px}
.task{height:4px;background:linear-gradient(90deg,#2b2720 33%,#5c564c 33% 41%,#221f1e 41%)}
command-line{position:absolute;left:411px;right:383px;bottom:38px}ime-bar{position:absolute;left:1183px;bottom:49px}`);
</script>
</body>
</html>
